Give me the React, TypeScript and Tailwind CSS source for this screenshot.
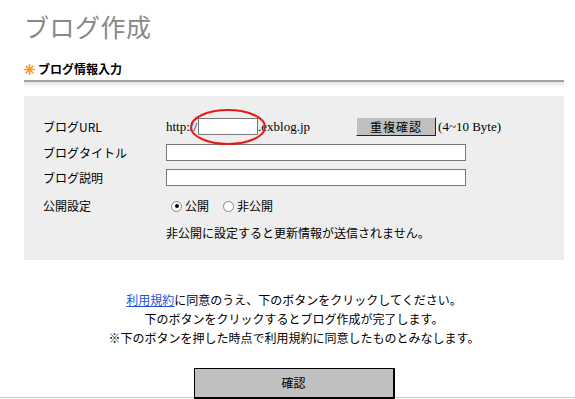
import React from 'react';

const jp = "font-['Noto_Sans_CJK_JP','Noto_Sans',sans-serif]";
const serif = "font-['Liberation_Serif',serif]";

function Asterisk() {
    return (
        <svg width="11" height="11" viewBox="0 0 11 11" className="shrink-0">
            <g stroke="#f39a1e" strokeWidth="1.6" strokeLinecap="round">
                <line x1="5.5" y1="0.8" x2="5.5" y2="10.2" />
                <line x1="0.8" y1="5.5" x2="10.2" y2="5.5" />
                <line x1="2.2" y1="2.2" x2="8.8" y2="8.8" />
                <line x1="8.8" y1="2.2" x2="2.2" y2="8.8" />
            </g>
        </svg>
    );
}

export default function App() {
    return (
        <div className={`w-[575px] h-[399px] overflow-hidden bg-white ${jp} text-black`}>
            <div className="pl-[24px] pr-[11px]">
                {/* Page title */}
                <h1 className="pt-[11px] text-[25px] leading-[30px] text-[#888888] tracking-[0.5px]">ブログ作成</h1>

                {/* Section header */}
                <div className="mt-[20px] flex items-center gap-[3px] h-[16px]">
                    <Asterisk />
                    <span className="text-[12px] font-bold leading-[16px]">ブログ情報入力</span>
                </div>
                <div className="mt-[3px] border-b-2 border-[#a3a3a3]" />
                <div className="h-[6px] bg-gradient-to-b from-[#e4e4e4] to-white" />

                {/* Form box */}
                <div className="mt-[8px] h-[164px] bg-[#eeeeee] pt-[21px] pl-[19px] text-[12px]">
                    <div className="grid grid-cols-[123px_1fr] gap-y-[8px] items-center">
                        <div className="leading-[19px]">ブログURL</div>
                        <div className="flex items-center h-[19px]">
                            <span className={`${serif} text-[13px]`}>http://</span>
                            <div className="relative ml-[1px]">
                                <div className="w-[60px] h-[17px] bg-white border border-[#777777]" />
                                <svg width="78" height="38" viewBox="0 0 78 38" className="absolute left-[-9px] top-[-10px]">
                                    <ellipse cx="39" cy="19" rx="37" ry="17" fill="none" stroke="#e51a1a" strokeWidth="2" />
                                </svg>
                            </div>
                            <span className={`${serif} text-[13px]`}>.exblog.jp</span>
                            <button className="ml-[46px] w-[80px] h-[19px] bg-[#c0c0c0] border border-[#f0f0f0] border-r-[#222] border-b-[#222] text-[12px] leading-[15px] tracking-[1px]">重複確認</button>
                            <span className={`${serif} text-[13px] ml-[2px]`}>(4~10 Byte)</span>
                        </div>

                        <div className="leading-[17px]">ブログタイトル</div>
                        <div className="w-[300px] h-[17px] bg-white border border-[#777777]" />

                        <div className="leading-[17px]">ブログ説明</div>
                        <div className="w-[300px] h-[17px] bg-white border border-[#777777]" />

                        <div className="leading-[20px] mt-[2px]">公開設定</div>
                        <div className="flex items-center h-[20px] mt-[2px] pl-[5px]">
                            <span className="w-[11px] h-[11px] rounded-full bg-white border border-[#888] flex items-center justify-center">
                                <span className="w-[4px] h-[4px] rounded-full bg-black" />
                            </span>
                            <span className="ml-[3px]">公開</span>
                            <span className="ml-[14px] w-[11px] h-[11px] rounded-full bg-white border border-[#888]" />
                            <span className="ml-[3px]">非公開</span>
                        </div>

                        <div />
                        <div className="leading-[18px]">非公開に設定すると更新情報が送信されません。</div>
                    </div>
                </div>

                {/* Agreement text */}
                <div className="mt-[30px] text-center text-[12px] leading-[19px]">
                    <p>
                        <a href="#" className="text-[#1a55d6] underline">利用規約</a>に同意のうえ、下のボタンをクリックしてください。
                    </p>
                    <p>下のボタンをクリックするとブログ作成が完了します。</p>
                    <p>※下のボタンを押した時点で利用規約に同意したものとみなします。</p>
                </div>

                <div className="mt-[21px] flex justify-center">
                    <button className="relative z-10 w-[201px] h-[31px] bg-[#c0c0c0] border border-black border-r-2 border-b-2 text-[12px]">確認</button>
                </div>
            </div>
            <div className="mt-[-2px] border-b border-[#c8c8c8]" />
        </div>
    );
}
